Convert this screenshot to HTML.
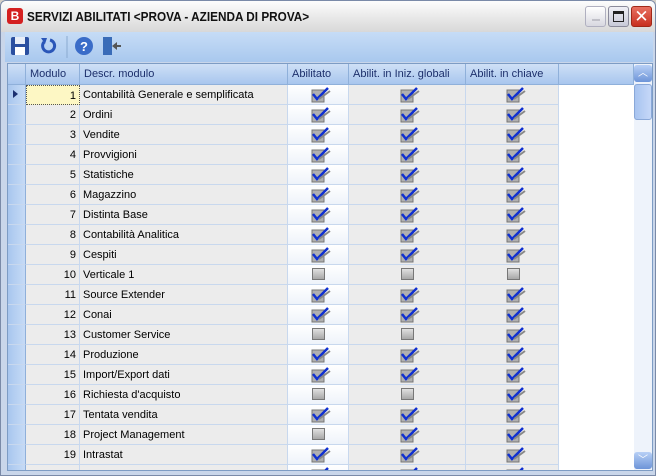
<!DOCTYPE html>
<html><head><meta charset="utf-8"><style>
*{margin:0;padding:0;box-sizing:border-box}
body{width:656px;height:476px;overflow:hidden;background:#d4d0c8;font-family:"Liberation Sans",sans-serif;font-size:11px;position:relative}
.win{position:absolute;left:0;top:0;width:656px;height:476px;border:1px solid #7a8aa8;border-radius:6px 6px 0 0;background:#c9d6ea;overflow:hidden}
.title{position:absolute;left:0;top:0;width:656px;height:31px;background:linear-gradient(#fdfdfd,#e6e6e6 60%,#d8d8d8);}
.title .t{position:absolute;left:26px;top:8px;font-weight:bold;font-size:13px;color:#111;transform:scaleX(0.905);transform-origin:0 0;white-space:nowrap}
.logo{position:absolute;left:6px;top:7px;width:16px;height:16px;background:#d42020;border-radius:3px;color:#fff;font-weight:bold;font-size:12px;text-align:center;line-height:16px}
.btn{position:absolute;top:5px;width:21px;height:21px;border-radius:3px;border:1px solid #8a8a9a}
.tb{position:absolute;left:4px;top:31px;width:648px;height:30px;background:linear-gradient(#c6dcf6,#a9c8ee)}
.grid{position:absolute;left:6px;top:62px;width:646px;height:408px;background:#fff;overflow:hidden;border:1px solid #7d9cc4}
.hdr{position:absolute;top:0;height:21px;background:linear-gradient(#cfe0f6,#a8c6ee);border-right:1px solid #8fb0da;border-bottom:1px solid #8fb0da;color:#1c2f6b;padding:4px 0 0 4px;white-space:nowrap}
.row{position:absolute;left:0;height:20px;width:551px}
.c{position:absolute;top:0;height:20px;border-right:1px solid #c8d8ee;border-bottom:1px solid #c8d8ee;background:#ececec;padding-top:4px;white-space:nowrap}
.ind{background:linear-gradient(90deg,#a8c6ee,#c6dbf6);border-right:1px solid #8fb0da}
.ab{background:linear-gradient(#fff,#eef3fa)}
.cb{position:absolute;top:3px;width:13px;height:12px;background:linear-gradient(#e0e0e0,#a8a8a8);border:1px solid #777}
.ck{position:absolute;top:1px}
.sb{position:absolute;left:626px;top:0;width:19px;height:406px;background:#eef3fb}
</style></head><body><div class="win">
<div class="title"><div class="logo">B</div><div class="t">SERVIZI ABILITATI &lt;PROVA - AZIENDA DI PROVA&gt;</div>
<div class="btn" style="left:584px;background:linear-gradient(#fff,#d8d8e0);border-color:#b0b0c0"><div style="position:absolute;left:6px;top:12px;width:8px;height:2px;background:#c0c0c8"></div></div>
<div class="btn" style="left:607px;background:linear-gradient(#f0f0f6,#c8cad8)"><div style="position:absolute;left:4px;top:4px;width:11px;height:11px;border:1px solid #222;border-top-width:3px"></div></div>
<div class="btn" style="left:630px;background:linear-gradient(#e87060,#c83020);border-color:#a02818;color:#fff;font-size:17px;text-align:center;line-height:19px">✕</div>
</div>
<div class="tb">
<svg width="200" height="30" style="position:absolute;left:0;top:0">
<rect x="6" y="5" width="18" height="18" rx="2" fill="#2a4fa0"/><rect x="10" y="5" width="10" height="7" fill="#e8eef8"/><rect x="10" y="15" width="10" height="8" fill="#fff"/>
<path d="M39 10 A6 6 0 1 0 45 8" fill="none" stroke="#2a56b8" stroke-width="3"/><path d="M36 6 l6 0 l-2 6z" fill="#2a56b8"/>
<line x1="62" y1="4" x2="62" y2="26" stroke="#8aaad0"/>
<circle cx="79" cy="14" r="9" fill="#3a6cc8"/><text x="75" y="19" fill="#fff" font-size="13" font-weight="bold" font-family="Liberation Sans">?</text>
<rect x="98" y="5" width="9" height="18" fill="#3a6cb8"/><path d="M107 14 l5 -4 v3 h4 v2 h-4 v3z" fill="#555"/>
</svg></div>
<div class="grid">
<div class="hdr" style="left:0;width:18px"></div>
<div class="hdr" style="left:18px;width:54px">Modulo</div>
<div class="hdr" style="left:72px;width:208px">Descr. modulo</div>
<div class="hdr" style="left:280px;width:61px">Abilitato</div>
<div class="hdr" style="left:341px;width:117px">Abilit. in Iniz. globali</div>
<div class="hdr" style="left:458px;width:93px">Abilit. in chiave</div>
<div class="hdr" style="left:551px;width:75px"></div>
<div id="rows"></div>
<div class="sb"><div style="position:absolute;left:0;top:1px;width:18px;height:17px;border-radius:3px;background:linear-gradient(#b8d0f6,#6d94d8);color:#fff;text-align:center;font-size:10px;line-height:17px">︿</div>
<div style="position:absolute;left:0;top:20px;width:18px;height:36px;border-radius:3px;background:linear-gradient(90deg,#a8c4f0,#c6d8f8);border:1px solid #8aa8d8"></div>
<div style="position:absolute;left:0;top:388px;width:18px;height:17px;border-radius:3px;background:linear-gradient(#b8d0f6,#6d94d8);color:#fff;text-align:center;font-size:10px;line-height:17px">﹀</div></div>
</div>
<script>
var d=[["Contabilità Generale e semplificata",1,1,1],["Ordini",1,1,1],["Vendite",1,1,1],["Provvigioni",1,1,1],["Statistiche",1,1,1],["Magazzino",1,1,1],["Distinta Base",1,1,1],["Contabilità Analitica",1,1,1],["Cespiti",1,1,1],["Verticale 1",0,0,0],["Source Extender",1,1,1],["Conai",1,1,1],["Customer Service",0,0,1],["Produzione",1,1,1],["Import/Export dati",1,1,1],["Richiesta d'acquisto",0,0,1],["Tentata vendita",1,1,1],["Project Management",0,1,1],["Intrastat",1,1,1],["",1,1,1]];
function box(x,c){return c?'<svg class="ck" style="left:'+x+'px" width="20" height="17"><rect x="1" y="4" width="12" height="12" fill="#b0b0b0" stroke="#777"/><path d="M2 8 L6 13 L17 2" fill="none" stroke="#1030d0" stroke-width="2.5"/><path d="M8 13 L19 5" stroke="#888" stroke-width="2"/></svg>':'<div class="cb" style="left:'+(x+1)+'px"></div>';}
var h='';d.forEach(function(r,i){var y=21+i*20;h+='<div class="row" style="top:'+y+'px"><div class="c ind" style="left:0;width:18px">'+(i==0?'<span style="position:absolute;left:5px;top:5px;border-left:5px solid #1c3070;border-top:4px solid transparent;border-bottom:4px solid transparent"></span>':'')+'</div><div class="c" style="left:18px;width:54px;text-align:right;padding-right:3px;'+(i==0?'background:#fdf7c4;border:1px dotted #555;':'')+'">'+(i+1)+'</div><div class="c" style="left:72px;width:208px;padding-left:3px">'+r[0]+'</div><div class="c ab" style="left:280px;width:61px">'+box(23,r[1])+'</div><div class="c" style="left:341px;width:117px">'+box(51,r[2])+'</div><div class="c" style="left:458px;width:93px">'+box(40,r[3])+'</div></div>';});
document.getElementById('rows').innerHTML=h;
</script>
</div></body></html>
